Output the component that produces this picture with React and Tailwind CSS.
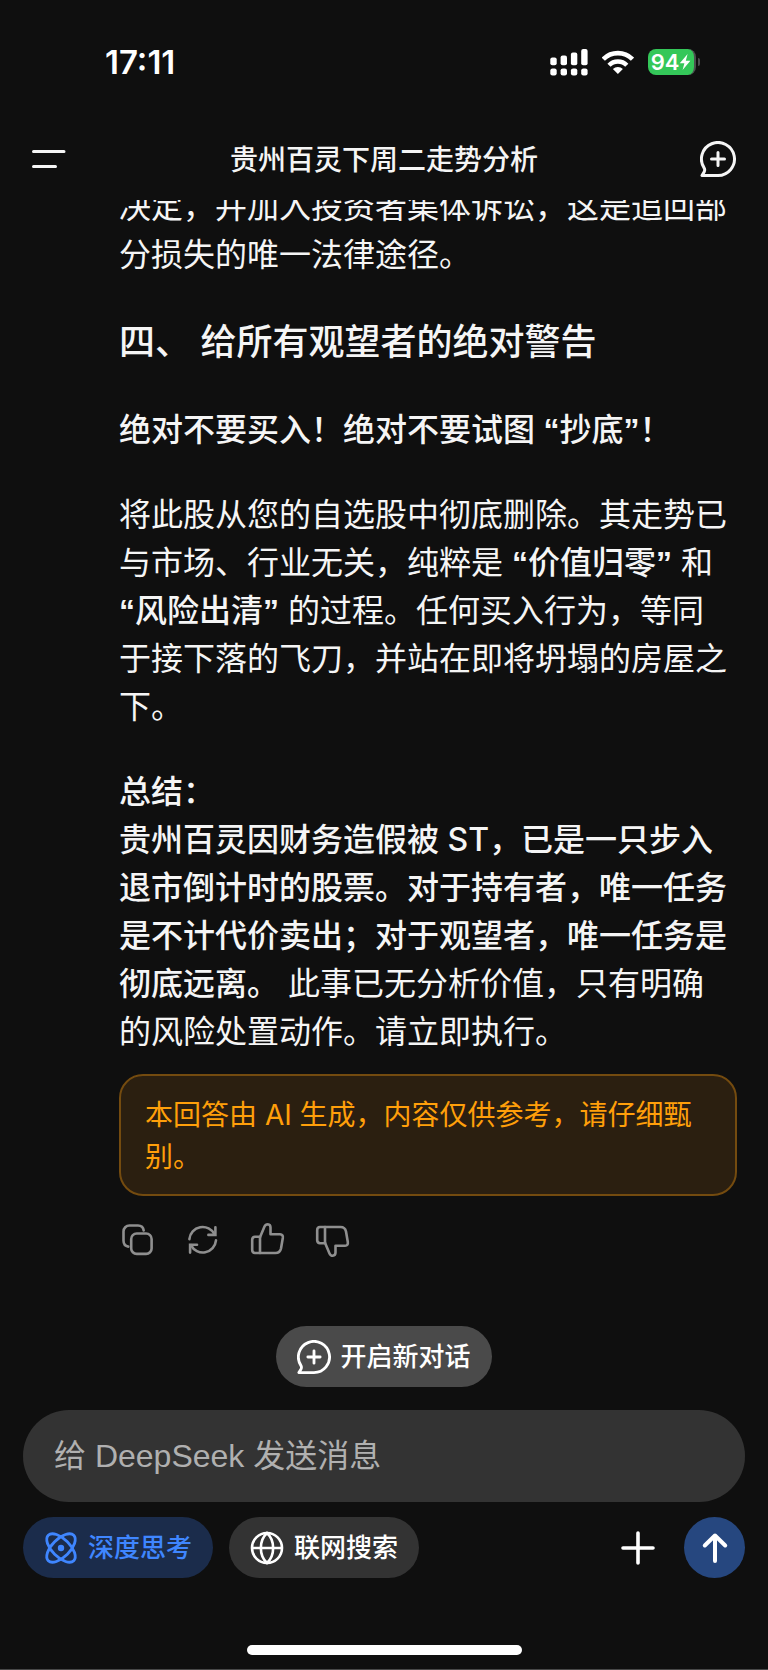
import React from 'react';

function SignalIcon() {
  return (
    <svg width="38" height="27" viewBox="0 0 38 27" fill="white" aria-hidden="true">
      <rect x="0.3" y="8.5" width="6.4" height="7.7" rx="2" />
      <rect x="10.6" y="6.6" width="6.4" height="9.6" rx="2" />
      <rect x="20.9" y="3.4" width="6.4" height="12.8" rx="2" />
      <rect x="31.2" y="0" width="6.4" height="16.2" rx="2" />
      <rect x="0.3" y="19.4" width="6.4" height="7" rx="2.2" />
      <rect x="10.6" y="19.4" width="6.4" height="7" rx="2.2" />
      <rect x="20.9" y="19.4" width="6.4" height="7" rx="2.2" />
      <rect x="31.2" y="19.4" width="6.4" height="7" rx="2.2" />
    </svg>
  );
}

function WifiIcon() {
  return (
    <svg width="32" height="25" viewBox="0 0 32 25" fill="none" aria-hidden="true">
      <path d="M1.3 9.2A20.6 20.6 0 0 1 30.5 9.2" stroke="white" strokeWidth="4.6" />
      <path d="M7 15.2A12.4 12.4 0 0 1 24.8 15.2" stroke="white" strokeWidth="4.4" />
      <path d="M15.9 24 10.9 19A7 7 0 0 1 20.9 19Z" fill="white" />
    </svg>
  );
}

function Battery() {
  return (
    <div className="flex items-center gap-0.5">
      <div className="flex h-[26px] w-12 items-center justify-center rounded-lg border-r-2 border-[#4d4d4f] bg-[#34c759] text-[22px] leading-none font-semibold">
        94
        <svg width="12" height="18" viewBox="0 0 12 18" fill="white" aria-hidden="true">
          <path d="M8.6 1 0.8 10.2H5.4L3.6 17 11.4 7.8H6.8Z" />
        </svg>
      </div>
      <div className="h-2 w-0.5 rounded-r-full bg-[#4d4d4f]" />
    </div>
  );
}

function ChatPlusIcon({ size, strokeWidth }) {
  return (
    <svg width={size} height={size} viewBox="0 0 36 36" fill="none" stroke="currentColor" strokeWidth={strokeWidth} strokeLinecap="round" strokeLinejoin="round" aria-hidden="true">
      <path d="M18 34.5A16.5 16.5 0 1 0 4.2 27.1C5 28.3 4.9 29.3 4.2 30.9L2 34.5Z" />
      <path d="M18 11.5V24.5M11.5 18H24.5" />
    </svg>
  );
}

function AtomIcon() {
  return (
    <svg width="34" height="34" viewBox="0 0 34 34" fill="none" stroke="currentColor" strokeWidth="2.8" aria-hidden="true">
      <ellipse cx="17" cy="17" rx="18" ry="9" transform="rotate(45 17 17)" />
      <ellipse cx="17" cy="17" rx="18" ry="9" transform="rotate(-45 17 17)" />
      <circle cx="17" cy="17" r="3.2" fill="currentColor" stroke="none" />
    </svg>
  );
}

function GlobeIcon() {
  return (
    <svg width="34" height="34" viewBox="0 0 34 34" fill="none" stroke="currentColor" strokeWidth="2.6" aria-hidden="true">
      <circle cx="17" cy="17" r="15" />
      <path d="M2 17H32M17 2C8.8 9.6 8.8 24.4 17 32C25.2 24.4 25.2 9.6 17 2Z" />
    </svg>
  );
}

// Emphasised phrase between curly quotes
function Quoted({ children }) {
  return (
    <strong className="font-medium">
      <span className="font-['Liberation_Sans',sans-serif] leading-none font-bold">“</span>
      {children}
      <span className="font-['Liberation_Sans',sans-serif] leading-none font-bold">”</span>
    </strong>
  );
}

const thumb = (
  <>
    <path d="M11 31H6A3 3 0 0 1 3.2 28V17.5A3 3 0 0 1 6 14.8H11Z" />
    <path d="M11 15.2 15.5 4.6Q16.5 2.3 18.8 2.3Q21.5 2.5 21.5 5.5V12.2H31Q34.3 12.5 33.8 16L32 26.5Q31 31 26.5 31H11" />
  </>
);

const actions = [
  {
    label: '复制',
    icon: (
      <>
        <rect x="12.2" y="11.5" width="20.4" height="20.4" rx="5.5" />
        <path d="M24.7 8.5C24.3 5.4 22.2 3.5 19 3.5H10.5A6 6 0 0 0 4.5 9.5V18.5C4.5 22 6.5 24.2 9.3 24.6" />
      </>
    ),
  },
  {
    label: '重新生成',
    icon: (
      <>
        <path d="M5.4 17.2A13.3 13.3 0 0 1 30.6 12.4" />
        <path d="M32 18.4A13.3 13.3 0 0 1 6.9 23.2" />
        <path d="M31.4 5.2V12.9H24.4M6.1 30.6V22.7H13" strokeLinejoin="miter" />
      </>
    ),
  },
  { label: '赞', icon: thumb },
  { label: '踩', icon: <g transform="matrix(1 0 0 -1 0 36)">{thumb}</g> },
];

export default function App() {
  return (
    <div className="flex min-h-screen flex-col border-b border-[#484848] bg-[#0f0f0f] font-['Inter','Noto_Sans_CJK_SC',sans-serif] text-[#f5f5f5]" lang="zh-CN">
      {/* Status bar */}
      <div className="mt-[38px] flex h-12 items-center justify-between pr-[68px] pl-[105px] text-white">
        <span className="text-[33px] leading-none font-semibold">17:11</span>
        <div className="flex items-center gap-[14px]">
          <SignalIcon />
          <WifiIcon />
          <Battery />
        </div>
      </div>

      <header className="mt-8 flex h-[82px] items-center justify-between px-8">
        <button type="button" aria-label="菜单">
          <svg width="36" height="36" viewBox="0 0 36 36" stroke="currentColor" strokeWidth="3" strokeLinecap="round" aria-hidden="true">
            <path d="M1.5 10.5H32M1.5 25.5H23.5" />
          </svg>
        </button>
        <h1 className="pt-0.5 text-[28px] leading-10 font-medium">贵州百灵下周二走势分析</h1>
        <button type="button" aria-label="新对话">
          <ChatPlusIcon size={36} strokeWidth="3" />
        </button>
      </header>

      {/* Conversation, scrolled so the first line is partly under the header */}
      <main className="flex-1 overflow-hidden pr-[31px] pl-[119px]">
        <div className="-mt-[17px] pr-2 text-[32px] leading-[48px]">
          <p>决定，并加入投资者集体诉讼，这是追回部分损失的唯一法律途径。</p>
          <h2 className="mt-[35px] text-[36px] leading-[56px] font-medium">四、 给所有观望者的绝对警告</h2>
          <p className="mt-9 font-medium">
            绝对不要买入！绝对不要试图 <Quoted>抄底</Quoted>！
          </p>
          <p className="mt-[37px]">
            将此股从您的自选股中彻底删除。其走势已与市场、行业无关，纯粹是 <Quoted>价值归零</Quoted> 和 <Quoted>风险出清</Quoted> 的过程。任何买入行为，等同于接下落的飞刀，并站在即将坍塌的房屋之下。
          </p>
          <p className="mt-[37px]">
            <strong className="font-medium">
              总结：
              <br />
              贵州百灵因财务造假被 ST，已是一只步入退市倒计时的股票。对于持有者，唯一任务是不计代价卖出；对于观望者，唯一任务是彻底远离。
            </strong>{' '}
            此事已无分析价值，只有明确的风险处置动作。请立即执行。
          </p>
        </div>

        <div className="mt-[18px] rounded-3xl border-2 border-[#744b0f] bg-[#2b1f10] px-6 pt-[18px] pb-4 text-[28px] leading-[42px] text-[#ff9f0a]">
          本回答由 AI 生成，内容仅供参考，请仔细甄别。
        </div>

        <div className="mt-[26px] flex gap-[29px] text-[#8f8f8f]">
          {actions.map((a) => (
            <button key={a.label} type="button" aria-label={a.label}>
              <svg width="36" height="36" viewBox="0 0 36 36" fill="none" stroke="currentColor" strokeWidth="2.6" strokeLinecap="round" strokeLinejoin="round" aria-hidden="true">
                {a.icon}
              </svg>
            </button>
          ))}
        </div>
      </main>

      {/* Composer */}
      <footer className="flex flex-col px-[23px] pb-[14px]">
        <button type="button" className="flex h-[61px] items-center gap-[9px] self-center rounded-full bg-[#4a4a4a] px-[21px] text-[26px] font-medium text-white">
          <ChatPlusIcon size={34} strokeWidth="3" />
          开启新对话
        </button>

        <input
          type="text"
          aria-label="消息"
          placeholder="给 DeepSeek 发送消息"
          className="mt-[23px] h-[92px] w-full rounded-full bg-[#333333] px-[31px] font-['Liberation_Sans','Noto_Sans_CJK_SC',sans-serif] text-[32px] outline-none placeholder:text-[#b0b0b0]"
        />

        <div className="mt-[15px] flex items-center text-[26px] font-medium text-white">
          <button type="button" className="flex h-[61px] items-center gap-[10px] rounded-full bg-[#1b2c4b] px-[21px] text-[#3f86ff]">
            <AtomIcon />
            深度思考
          </button>
          <button type="button" className="ml-4 flex h-[61px] items-center gap-[10px] rounded-full bg-[#333333] px-[21px]">
            <GlobeIcon />
            联网搜索
          </button>
          <button type="button" aria-label="添加附件" className="ml-auto">
            <svg width="36" height="36" viewBox="0 0 36 36" stroke="currentColor" strokeWidth="3.6" strokeLinecap="round" aria-hidden="true">
              <path d="M18 3V33M3 18H33" />
            </svg>
          </button>
          <button type="button" aria-label="发送" className="ml-7 flex size-[61px] items-center justify-center rounded-full bg-[#26477f]">
            <svg width="36" height="36" viewBox="0 0 36 36" fill="none" stroke="currentColor" strokeWidth="4" strokeLinecap="round" strokeLinejoin="round" aria-hidden="true">
              <path d="M18 31V5.5M7.8 15.5 18 5.5 28.2 15.5" />
            </svg>
          </button>
        </div>

        <div className="mt-[67px] h-[10px] w-[275px] self-center rounded-full bg-white" />
      </footer>
    </div>
  );
}
